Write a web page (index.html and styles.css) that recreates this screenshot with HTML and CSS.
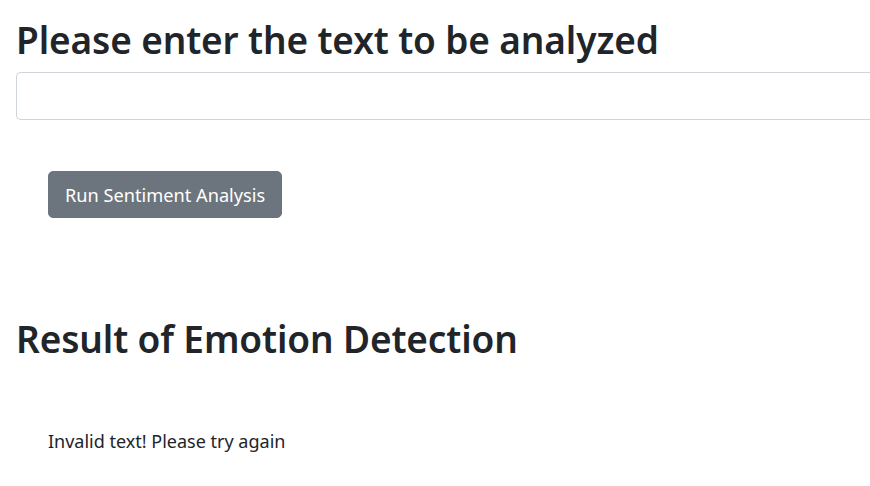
FILE: index.html
```html
<!DOCTYPE html>
<html lang="en">
<head>
<meta charset="utf-8">
<title>Emotion Detection</title>
<link rel="stylesheet" href="styles.css">
</head>
<body>
<main class="page">
  <section class="input-section">
    <h1 class="heading">Please enter the text to be analyzed</h1>
    <input class="text-field" type="text" aria-label="Text to analyze">
    <div class="actions">
      <button class="btn-run" type="button">Run Sentiment Analysis</button>
    </div>
  </section>
  <section class="result-section">
    <h1 class="heading">Result of Emotion Detection</h1>
    <p class="message">Invalid text! Please try again</p>
  </section>
</main>
</body>
</html>
```

FILE: styles.css
```css
html, body {
  margin: 0;
  padding: 0;
  overflow: hidden;
  background: #fff;
}

body {
  font-family: "Noto Sans", "Open Sans", sans-serif;
  color: #212529;
}

.page {
  padding: 18px 0 0 16px;
}

.heading {
  margin: 0;
  font-size: 37px;
  font-weight: 600;
  letter-spacing: -0.12px;
  line-height: 44px;
  color: #212529;
}

.text-field {
  display: block;
  box-sizing: border-box;
  width: 100%;
  height: 48px;
  margin-top: 10px;
  padding: 8px 16px;
  border: 1px solid #ced4da;
  border-right: none;
  border-radius: 5px 0 0 5px;
  font-family: inherit;
  font-size: 20px;
  background: #fff;
}

.actions {
  padding: 51px 0 0 32px;
}

.btn-run {
  box-sizing: border-box;
  height: 47px;
  padding: 0 16px;
  border: 1px solid #6c757d;
  border-radius: 5px;
  background: #6c757d;
  color: #fff;
  font-family: inherit;
  font-size: 18.2px;
}

.result-section {
  margin-top: 99px;
}

.message {
  margin: 68px 0 0 32px;
  font-size: 18px;
  line-height: 24px;
}
```
